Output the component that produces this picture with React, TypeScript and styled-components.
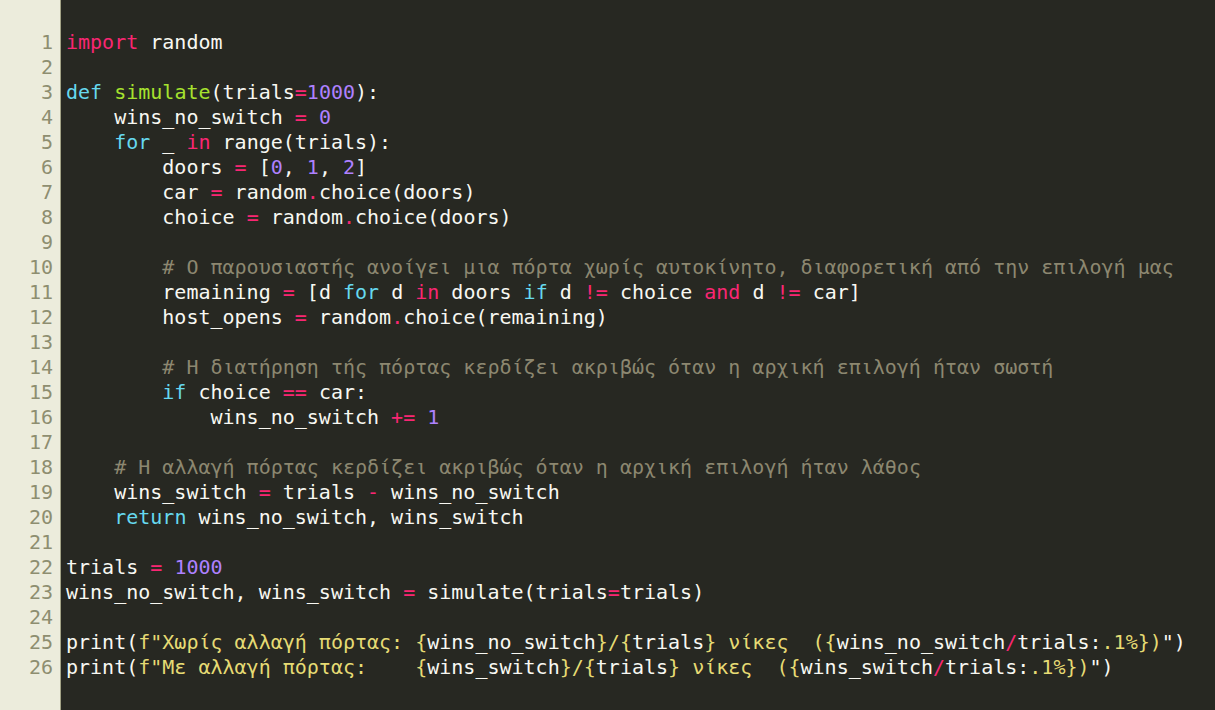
import React from "react";
import styled, { createGlobalStyle } from "styled-components";

const Global = createGlobalStyle`
  html, body { margin: 0; padding: 0; background: #272822; }
  body { overflow: hidden; }
`;

const Editor = styled.div`
  display: flex;
  width: 1215px;
  height: 710px;
  background: #272822;
  font-family: "DejaVu Sans Mono", monospace;
  font-size: 20px;
  line-height: 25px;
  overflow: hidden;
`;

const Gutter = styled.div`
  width: 53px;
  flex: none;
  padding: 30px 7px 0 0;
  background: #ececdc;
  border-right: 1px solid #a3a386;
  color: #8e8e70;
  text-align: right;
`;

const Code = styled.div`
  flex: 1;
  padding: 30px 0 0 5px;
  color: #f8f8f2;
`;

const Line = styled.div`
  white-space: pre;
  height: 25px;
`;

const colors: Record<string, string> = {
  k: "#f92672",
  b: "#66d9ef",
  g: "#a6e22e",
  n: "#ae81ff",
  s: "#e6db74",
  c: "#8c8770",
  w: "#f8f8f2",
};

const Tok = styled.span<{ $c: string }>`
  color: ${(p) => colors[p.$c]};
`;

type T = [string, string];
const w = (t: string): T => ["w", t];
const k = (t: string): T => ["k", t];
const b = (t: string): T => ["b", t];
const n = (t: string): T => ["n", t];
const s = (t: string): T => ["s", t];
const c = (t: string): T => ["c", t];
const g = (t: string): T => ["g", t];

const lines: T[][] = [
  [k("import"), w(" random")],
  [],
  [b("def"), w(" "), g("simulate"), w("(trials"), k("="), n("1000"), w("):")],
  [w("    wins_no_switch "), k("="), w(" "), n("0")],
  [w("    "), b("for"), w(" _ "), k("in"), w(" range(trials):")],
  [w("        doors "), k("="), w(" ["), n("0"), w(", "), n("1"), w(", "), n("2"), w("]")],
  [w("        car "), k("="), w(" random"), k("."), w("choice(doors)")],
  [w("        choice "), k("="), w(" random"), k("."), w("choice(doors)")],
  [],
  [w("        "), c("# Ο παρουσιαστής ανοίγει μια πόρτα χωρίς αυτοκίνητο, διαφορετική από την επιλογή μας")],
  [
    w("        remaining "), k("="), w(" [d "), b("for"), w(" d "), k("in"), w(" doors "), b("if"),
    w(" d "), k("!="), w(" choice "), k("and"), w(" d "), k("!="), w(" car]"),
  ],
  [w("        host_opens "), k("="), w(" random"), k("."), w("choice(remaining)")],
  [],
  [w("        "), c("# Η διατήρηση τής πόρτας κερδίζει ακριβώς όταν η αρχική επιλογή ήταν σωστή")],
  [w("        "), b("if"), w(" choice "), k("=="), w(" car:")],
  [w("            wins_no_switch "), k("+="), w(" "), n("1")],
  [],
  [w("    "), c("# Η αλλαγή πόρτας κερδίζει ακριβώς όταν η αρχική επιλογή ήταν λάθος")],
  [w("    wins_switch "), k("="), w(" trials "), k("-"), w(" wins_no_switch")],
  [w("    "), b("return"), w(" wins_no_switch, wins_switch")],
  [],
  [w("trials "), k("="), w(" "), n("1000")],
  [w("wins_no_switch, wins_switch "), k("="), w(" simulate(trials"), k("="), w("trials)")],
  [],
  [
    w("print("), s('f"Χωρίς αλλαγή πόρτας: {'), w("wins_no_switch"), s("}/{"), w("trials"),
    s("} νίκες  ({"), w("wins_no_switch"), k("/"), w("trials:"), s(".1%})"), w('")'),
  ],
  [
    w("print("), s('f"Με αλλαγή πόρτας:    {'), w("wins_switch"), s("}/{"), w("trials"),
    s("} νίκες  ({"), w("wins_switch"), k("/"), w("trials:"), s(".1%})"), w('")'),
  ],
];

export default function App() {
  return (
    <>
      <Global />
      <Editor>
        <Gutter>
          {lines.map((_, i) => (
            <Line key={i}>{i + 1}</Line>
          ))}
        </Gutter>
        <Code>
          {lines.map((toks, i) => (
            <Line key={i}>
              {toks.map(([col, text], j) => (
                <Tok key={j} $c={col}>
                  {text}
                </Tok>
              ))}
            </Line>
          ))}
        </Code>
      </Editor>
    </>
  );
}
